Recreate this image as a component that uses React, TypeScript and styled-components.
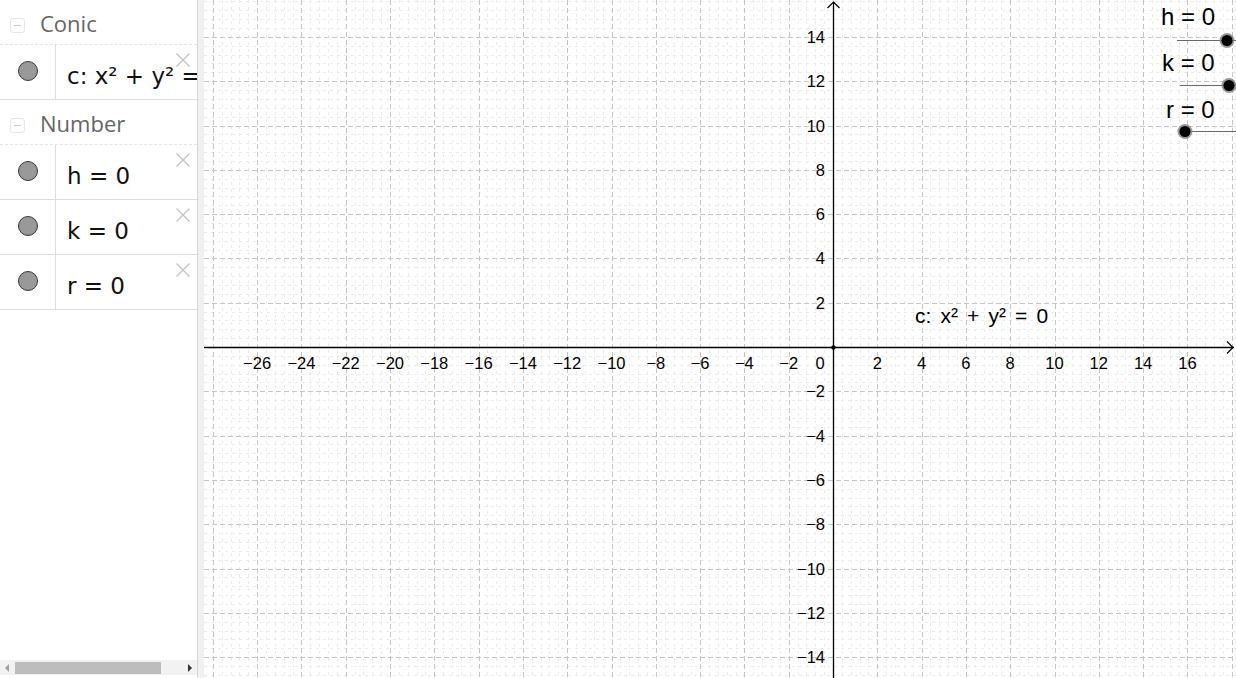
import * as React from 'react'
import styled, { createGlobalStyle } from 'styled-components'

// graphics view geometry (px, local to the canvas)
const UNIT = 22.15
const OX = 629
const OY = 347
const W = 1032
const H = 678
const MINOR = UNIT * 0.4

const GlobalStyle = createGlobalStyle`
  html, body {
    margin: 0;
    padding: 0;
    overflow: hidden;
    background: #fff;
  }
  #root {
    height: 100vh;
  }
`

const minus = (n: number) => (n < 0 ? `\u2212${Math.abs(n)}` : `${n}`)

const range = (from: number, to: number, step: number) => {
  const out: number[] = []
  for (let n = from; n <= to; n += step) out.push(n)
  return out
}

const CollapseIcon = () => (
  <StyledCollapse>
    <span />
  </StyledCollapse>
)

const DeleteCross = () => (
  <StyledCross viewBox="0 0 16 16">
    <path d="M1.5 1.5 L14.5 14.5 M14.5 1.5 L1.5 14.5" />
  </StyledCross>
)

interface ItemProps {
  children: React.ReactNode
}

const AlgebraItem: React.FC<ItemProps> = ({ children }) => (
  <ItemRow>
    <MarbleCell>
      <Marble />
    </MarbleCell>
    <ItemBody>{children}</ItemBody>
    <DeleteCross />
  </ItemRow>
)

const Grid = () => {
  const verticals: { x: number; major: boolean }[] = []
  for (let i = Math.ceil(-OX / MINOR); OX + i * MINOR <= W; i++) {
    verticals.push({ x: Math.round(OX + i * MINOR) + 0.5, major: i % 5 === 0 })
  }
  const horizontals: { y: number; major: boolean }[] = []
  for (let j = Math.ceil(-OY / MINOR); OY + j * MINOR <= H; j++) {
    horizontals.push({ y: Math.round(OY + j * MINOR) + 0.5, major: j % 5 === 0 })
  }
  return (
    <g shapeRendering="crispEdges">
      {verticals
        .filter((v) => !v.major)
        .map((v) => (
          <line key={'vm' + v.x} x1={v.x} x2={v.x} y1={0} y2={H} stroke="#ebebeb" strokeDasharray="3 4" />
        ))}
      {horizontals
        .filter((h) => !h.major)
        .map((h) => (
          <line key={'hm' + h.y} y1={h.y} y2={h.y} x1={0} x2={W} stroke="#ebebeb" strokeDasharray="3 4" />
        ))}
      {verticals
        .filter((v) => v.major)
        .map((v) => (
          <line key={'vM' + v.x} x1={v.x} x2={v.x} y1={0} y2={H} stroke="#c6c6c6" strokeDasharray="5 3" />
        ))}
      {horizontals
        .filter((h) => h.major)
        .map((h) => (
          <line key={'hM' + h.y} y1={h.y} y2={h.y} x1={0} x2={W} stroke="#c6c6c6" strokeDasharray="5 3" />
        ))}
    </g>
  )
}

const Axes = () => {
  const ax = OX + 0.5
  const ay = OY + 0.5
  const xs = range(-26, 16, 2).filter((n) => n !== 0)
  const ys = range(-14, 14, 2).filter((n) => n !== 0)
  return (
    <g>
      <line x1={0} x2={W - 2} y1={ay} y2={ay} stroke="#000" strokeWidth={1.3} />
      <path d={`M${W - 9} ${ay - 6} L${W - 3} ${ay} L${W - 9} ${ay + 6}`} fill="none" stroke="#000" strokeWidth={1.2} />
      <line x1={ax} x2={ax} y1={2} y2={H} stroke="#000" strokeWidth={1.3} />
      <path d={`M${ax - 6} 8 L${ax} 2 L${ax + 6} 8`} fill="none" stroke="#000" strokeWidth={1.2} />
      <circle cx={ax} cy={ay} r={2.2} fill="#000" />
      <g fontFamily="'Liberation Sans', Arial, sans-serif" fontSize={16.5} fill="#000">
        {xs.map((n) => (
          <text key={'x' + n} x={OX + n * UNIT} y={OY + 22} textAnchor="middle">
            {minus(n)}
          </text>
        ))}
        <text x={OX - 13} y={OY + 22} textAnchor="middle">
          0
        </text>
        {ys.map((n) => (
          <text key={'y' + n} x={OX - 8} y={OY - n * UNIT + 6} textAnchor="end">
            {minus(n)}
          </text>
        ))}
      </g>
    </g>
  )
}

interface TrackProps {
  from: number
  to: number
  y: number
  knob: number
}

const SliderTrack: React.FC<TrackProps> = ({ from, to, y, knob }) => (
  <g>
    <line x1={from} x2={to} y1={y} y2={y} stroke="#6a6a6a" strokeWidth={1} />
    <circle cx={knob} cy={y} r={7.5} fill="#808080" fillOpacity={0.8} />
    <circle cx={knob} cy={y} r={5.5} fill="#000" />
  </g>
)

const App: React.FC = () => {
  return (
    <>
      <GlobalStyle />
      <Page>
        <AlgebraPanel>
          <GroupHeader>
            <CollapseIcon />
            <GroupTitle>Conic</GroupTitle>
          </GroupHeader>
          <AlgebraItem>c: x² + y² = 0</AlgebraItem>
          <GroupHeader>
            <CollapseIcon />
            <GroupTitle>Number</GroupTitle>
          </GroupHeader>
          <AlgebraItem>h = 0</AlgebraItem>
          <AlgebraItem>k = 0</AlgebraItem>
          <AlgebraItem>r = 0</AlgebraItem>
          <ScrollBar>
            <ArrowLeft />
            <Thumb />
            <ArrowRight />
          </ScrollBar>
        </AlgebraPanel>
        <Splitter />
        <GraphicsView>
          <Drawing width={W} height={H}>
            <Grid />
            <Axes />
            <SliderTrack from={973} to={W + 10} y={40.5} knob={1023} />
            <SliderTrack from={976} to={W + 10} y={85.5} knob={1025} />
            <SliderTrack from={981} to={W + 10} y={131.5} knob={981} />
          </Drawing>
          <CanvasText $left={957} $top={5} $size={24}>
            h = 0
          </CanvasText>
          <CanvasText $left={958} $top={51} $size={24}>
            k = 0
          </CanvasText>
          <CanvasText $left={962} $top={98} $size={24}>
            r = 0
          </CanvasText>
          <CanvasText $left={711} $top={305} $size={21} $spacing={3.3}>
            c: x² + y² = 0
          </CanvasText>
        </GraphicsView>
      </Page>
    </>
  )
}

const Page = styled.div`
  display: flex;
  width: 100vw;
  height: 100vh;
  overflow: hidden;
`

const AlgebraPanel = styled.div`
  position: relative;
  width: 197px;
  flex: 0 0 197px;
  display: flex;
  flex-direction: column;
  background: #fff;
  border-right: 1px solid #d6d6d6;
  overflow: hidden;
`

const GroupHeader = styled.div`
  box-sizing: border-box;
  height: 45px;
  flex: 0 0 45px;
  display: flex;
  align-items: center;
  padding-left: 10px;
  gap: 15px;
  border-bottom: 1px dashed #e4e4e4;
`

const StyledCollapse = styled.div`
  box-sizing: border-box;
  width: 15px;
  height: 15px;
  margin-top: 6px;
  border: 1px solid #e6e6e6;
  border-radius: 3px;
  display: flex;
  align-items: center;
  justify-content: center;

  span {
    width: 7px;
    height: 1px;
    background: #c8c8c8;
  }
`

const GroupTitle = styled.span`
  font-family: 'Open Sans', 'Noto Sans', sans-serif;
  font-size: 22px;
  color: #666;
  line-height: 1;
  margin-top: 2px;
`

const ItemRow = styled.div`
  position: relative;
  box-sizing: border-box;
  height: 55px;
  flex: 0 0 55px;
  display: flex;
  border-bottom: 1px solid #dddddd;
`

const MarbleCell = styled.div`
  width: 56px;
  flex: 0 0 56px;
  border-right: 1px solid #dddddd;
  display: flex;
  justify-content: center;
  align-items: flex-start;
  padding-top: 16px;
  box-sizing: border-box;
`

const Marble = styled.div`
  box-sizing: border-box;
  width: 20px;
  height: 20px;
  border-radius: 50%;
  background: #999;
  border: 1px solid #3a3a3a;
`

const ItemBody = styled.div`
  flex: 1;
  padding: 18px 0 0 11px;
  font-family: 'DejaVu Sans', sans-serif;
  font-size: 23px;
  line-height: 26px;
  color: #111;
  white-space: nowrap;
  overflow: hidden;
`

const StyledCross = styled.svg`
  position: absolute;
  top: 7px;
  left: 175px;
  width: 16px;
  height: 16px;

  path {
    stroke: #c4c4c4;
    stroke-width: 1.4;
    fill: none;
  }
`

const ScrollBar = styled.div`
  position: relative;
  margin-top: auto;
  margin-bottom: 3px;
  height: 15px;
  flex: 0 0 15px;
  background: #f2f2f2;
`

const Thumb = styled.div`
  position: absolute;
  left: 15px;
  top: 2px;
  width: 146px;
  height: 12px;
  background: #bdbdbd;
`

const ArrowLeft = styled.div`
  position: absolute;
  left: 5px;
  top: 4px;
  width: 0;
  height: 0;
  border-top: 4px solid transparent;
  border-bottom: 4px solid transparent;
  border-right: 4px solid #a0a0a0;
`

const ArrowRight = styled.div`
  position: absolute;
  left: 188px;
  top: 4px;
  width: 0;
  height: 0;
  border-top: 4px solid transparent;
  border-bottom: 4px solid transparent;
  border-left: 4px solid #333;
`

const Splitter = styled.div`
  width: 6px;
  flex: 0 0 6px;
  background: #f0f0f0;
`

const GraphicsView = styled.div`
  position: relative;
  flex: 1;
  overflow: hidden;
  background: #fff;
`

const Drawing = styled.svg`
  display: block;
`

const CanvasText = styled.div<{ $left: number; $top: number; $size: number; $spacing?: number }>`
  position: absolute;
  left: ${(p) => p.$left}px;
  top: ${(p) => p.$top}px;
  font-family: 'Liberation Sans', Arial, sans-serif;
  font-size: ${(p) => p.$size}px;
  line-height: 1;
  word-spacing: ${(p) => p.$spacing ?? 0}px;
  color: #000;
  white-space: nowrap;
`

export default App
